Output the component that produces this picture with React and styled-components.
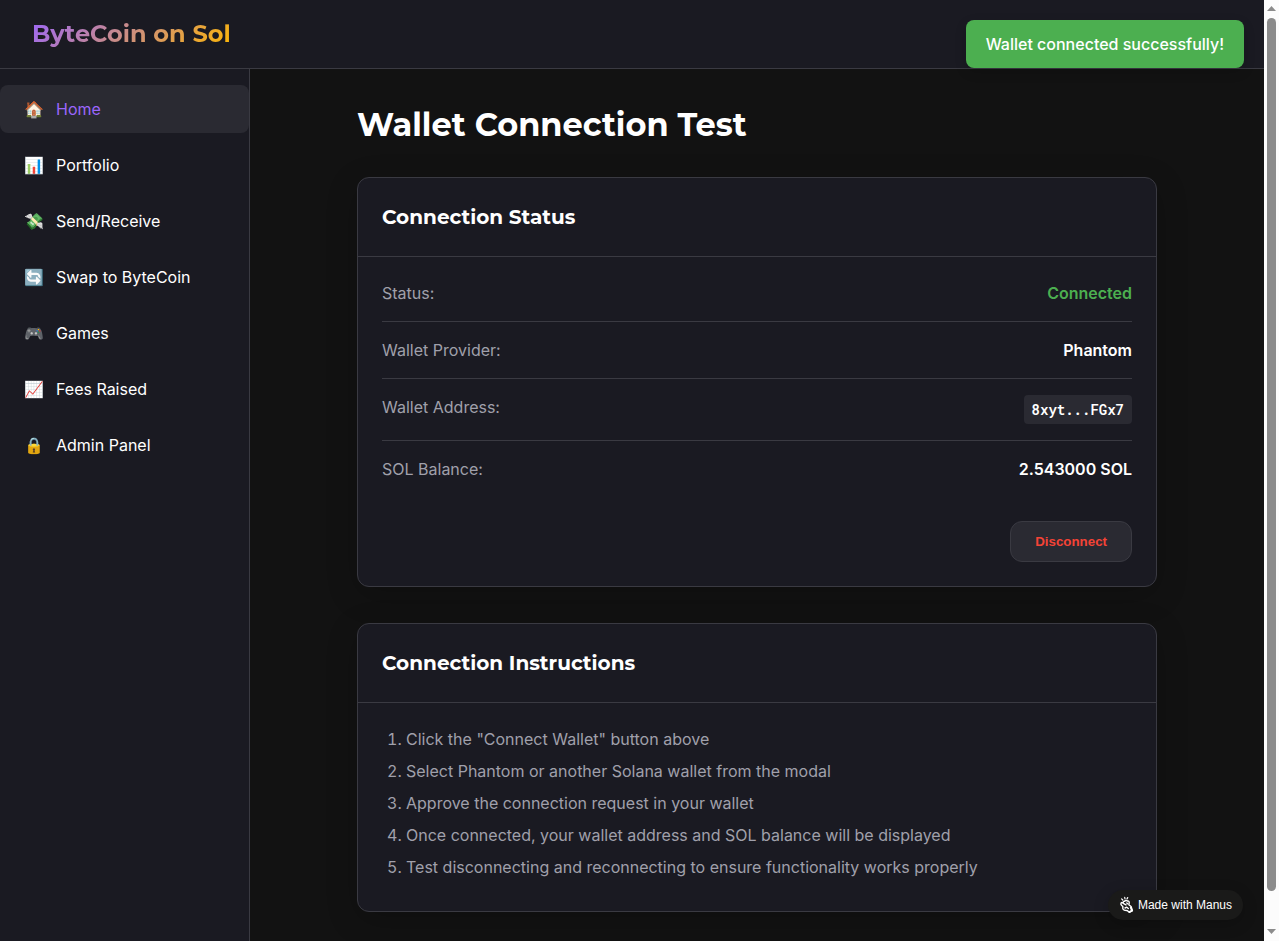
import React from "react";
import styled, { createGlobalStyle } from "styled-components";

const color = {
  page: "#121212",
  surface: "#1a1a22",
  raised: "#2a2a32",
  border: "#3a3a42",
  text: "#ffffff",
  muted: "#a0a0ab",
  purple: "#9b66fb",
  gold: "#ffb800",
  green: "#4caf50",
  red: "#f44336",
};

const body = `Inter, "Liberation Sans", sans-serif`;
const display = `Montserrat, "Open Sans", sans-serif`;
const mono = `"Roboto Mono", "Liberation Mono", monospace`;

const GlobalStyle = createGlobalStyle`
  *, *::before, *::after { box-sizing: border-box; }
  body {
    margin: 0;
    background: ${color.page};
    color: ${color.text};
    font: 400 16px/24px ${body};
  }
  h1, h2, ol, ul, dl, dd { margin: 0; padding: 0; }
`;

const Viewport = styled.div`
  display: flex;
  height: 100vh;
  overflow: hidden;
`;

const Page = styled.div`
  position: relative;
  flex: 1;
  min-width: 0;
  display: flex;
  flex-direction: column;
`;

const Header = styled.header`
  padding: 16px 32px;
  background: ${color.surface};
  border-bottom: 1px solid ${color.border};
`;

const Logo = styled.div`
  width: max-content;
  font: 700 24px/36px ${display};
  background: linear-gradient(135deg, ${color.purple}, ${color.gold});
  background-clip: text;
  -webkit-background-clip: text;
  color: transparent;
`;

const Columns = styled.div`
  flex: 1;
  min-height: 0;
  display: flex;
`;

const Sidebar = styled.nav`
  flex: 0 0 250px;
  padding-top: 16px;
  background: ${color.surface};
  border-right: 1px solid ${color.border};
`;

const NavList = styled.ul`
  display: flex;
  flex-direction: column;
  gap: 8px;
  list-style: none;
`;

const NavLink = styled.a`
  display: flex;
  gap: 12px;
  padding: 12px 24px;
  border-radius: 8px;
  text-decoration: none;
  color: ${(p) => (p.$active ? color.purple : color.text)};
  background: ${(p) => (p.$active ? color.raised : "transparent")};
`;

const NavIcon = styled.span`
  width: 20px;
`;

const Main = styled.main`
  flex: 1;
  min-width: 0;
  padding: 32px;
  overflow: hidden;
`;

const Content = styled.div`
  max-width: 800px;
  margin: 0 auto;
`;

const Title = styled.h1`
  margin-bottom: 28px;
  font: 700 32px/48px ${display};
`;

const Card = styled.section`
  margin-bottom: 36px;
  background: ${color.surface};
  border: 1px solid ${color.border};
  border-radius: 12px;
  box-shadow: 0 8px 32px rgba(0, 0, 0, 0.2);
`;

const CardHeader = styled.header`
  padding: 24px;
  border-bottom: 1px solid ${color.border};
`;

const CardTitle = styled.h2`
  font: 700 20px/30px ${display};
`;

const CardBody = styled.div`
  padding: ${(p) => (p.$tight ? "8px" : "24px")} 24px 24px;
`;

const Row = styled.div`
  display: flex;
  justify-content: space-between;
  padding: 16px 0;

  & + & {
    border-top: 1px solid ${color.border};
  }
`;

const Label = styled.dt`
  color: ${color.muted};
`;

const Value = styled.dd`
  display: flex;
  font-weight: 600;
  color: ${(p) => (p.$good ? color.green : color.text)};
`;

const Address = styled.code`
  padding: 4px 8px;
  border-radius: 4px;
  background: ${color.raised};
  font: 600 14px/21px ${mono};
`;

const Actions = styled.div`
  display: flex;
  justify-content: flex-end;
  margin-top: 24px;
`;

const DangerButton = styled.button`
  padding: 12px 24px;
  border: 1px solid ${color.border};
  border-radius: 12px;
  background: ${color.raised};
  color: ${color.red};
  font-family: "Liberation Sans", Arial, sans-serif;
  font-weight: 600;
  cursor: pointer;
`;

const Steps = styled.ol`
  padding-left: 24px;
  color: ${color.muted};
`;

const Step = styled.li`
  margin-bottom: 8px;
`;

const Toast = styled.div`
  position: absolute;
  top: 20px;
  right: 20px;
  padding: 12px 20px;
  border-radius: 8px;
  background: ${color.green};
  font-weight: 500;
  box-shadow: 0 4px 12px rgba(0, 0, 0, 0.15);
`;

const MadeWith = styled.a`
  position: absolute;
  right: 21px;
  bottom: 21px;
  display: flex;
  align-items: center;
  gap: 4px;
  height: 30px;
  padding: 0 11px;
  border-radius: 15px;
  background: #1a1a19;
  color: ${color.text};
  text-decoration: none;
  font: 400 12px/18px "Liberation Sans", Arial, sans-serif;
  box-shadow: 0 4px 16px rgba(0, 0, 0, 0.2);
`;

const ScrollTrack = styled.div`
  flex: 0 0 15px;
  display: flex;
  flex-direction: column;
  align-items: center;
  background: #fcfcfc;
`;

const ScrollThumb = styled.div`
  flex: 1;
  width: 9px;
  margin: 1px 0 33px;
  border-radius: 5px;
  background: #8b8b8b;
`;

const Arrow = styled.svg`
  display: block;
  width: 15px;
  height: 17px;
`;

const links = [
  ["🏠", "Home"],
  ["📊", "Portfolio"],
  ["💸", "Send/Receive"],
  ["🔄", "Swap to ByteCoin"],
  ["🎮", "Games"],
  ["📈", "Fees Raised"],
  ["🔒", "Admin Panel"],
];

const steps = [
  'Click the "Connect Wallet" button above',
  "Select Phantom or another Solana wallet from the modal",
  "Approve the connection request in your wallet",
  "Once connected, your wallet address and SOL balance will be displayed",
  "Test disconnecting and reconnecting to ensure functionality works properly",
];

function HandIcon() {
  return (
    <svg width="15" height="18" viewBox="0 0 15 18" fill="none" stroke="#fff" strokeWidth="1.4" strokeLinecap="round" strokeLinejoin="round" aria-hidden="true">
      <path d="M2.600 2.800l1.200 1.200M5.700 1.400l.3 1.400M8.700 1.600l-.7 1.300" strokeWidth="1.200" />
      <path d="M3.800 10.300C2.200 9.500 1.500 8 2.100 7c.6-.8 1.500-.5 2.200.1C4 5.800 4.800 5 5.800 5.300c.5-1 2-1.100 2.600-.2 1.300-.4 2 .6 1.800 1.900L9.800 8.800l2.300 1.700 1.300 4.200-3 1.700-2.200-1.900c-2.200.3-4.200-.5-4.400-2 0-.7.1-1.400 0-2.200z" />
      <path d="M4.300 7.300l2.700 1.600M6 12l1.800-.8 1.500 1.300M7.800 7l.7.700" />
      <path d="M11.700 11.500l1.300 3.100-2.300 1.200" strokeWidth="1.800" />
    </svg>
  );
}

export default function App() {
  return (
    <>
      <GlobalStyle />
      <Viewport>
        <Page>
          <Header>
            <Logo>ByteCoin on Sol</Logo>
          </Header>
          <Columns>
            <Sidebar>
              <NavList>
                {links.map(([icon, name], i) => (
                  <li key={name}>
                    <NavLink href="#" $active={i === 0}>
                      <NavIcon aria-hidden="true">{icon}</NavIcon>
                      <span>{name}</span>
                    </NavLink>
                  </li>
                ))}
              </NavList>
            </Sidebar>
            <Main>
              <Content>
                <Title>Wallet Connection Test</Title>
                <Card>
                  <CardHeader>
                    <CardTitle>Connection Status</CardTitle>
                  </CardHeader>
                  <CardBody $tight>
                    <dl>
                      <Row>
                        <Label>Status:</Label>
                        <Value $good>Connected</Value>
                      </Row>
                      <Row>
                        <Label>Wallet Provider:</Label>
                        <Value>Phantom</Value>
                      </Row>
                      <Row>
                        <Label>Wallet Address:</Label>
                        <Value>
                          <Address>8xyt...FGx7</Address>
                        </Value>
                      </Row>
                      <Row>
                        <Label>SOL Balance:</Label>
                        <Value>2.543000 SOL</Value>
                      </Row>
                    </dl>
                    <Actions>
                      <DangerButton type="button">Disconnect</DangerButton>
                    </Actions>
                  </CardBody>
                </Card>
                <Card>
                  <CardHeader>
                    <CardTitle>Connection Instructions</CardTitle>
                  </CardHeader>
                  <CardBody>
                    <Steps>
                      {steps.map((s) => (
                        <Step key={s}>{s}</Step>
                      ))}
                    </Steps>
                  </CardBody>
                </Card>
              </Content>
            </Main>
          </Columns>
          <Toast role="status">Wallet connected successfully!</Toast>
          <MadeWith href="#">
            <HandIcon />
            <span>Made with Manus</span>
          </MadeWith>
        </Page>
        <ScrollTrack aria-hidden="true">
          <Arrow viewBox="0 0 15 17">
            <path d="M3 11l4.500-5 4.500 5z" fill="#8b8b8b" />
          </Arrow>
          <ScrollThumb />
          <Arrow viewBox="0 0 15 17">
            <path d="M3 5l4.500 5 4.500-5z" fill="#8b8b8b" />
          </Arrow>
        </ScrollTrack>
      </Viewport>
    </>
  );
}
